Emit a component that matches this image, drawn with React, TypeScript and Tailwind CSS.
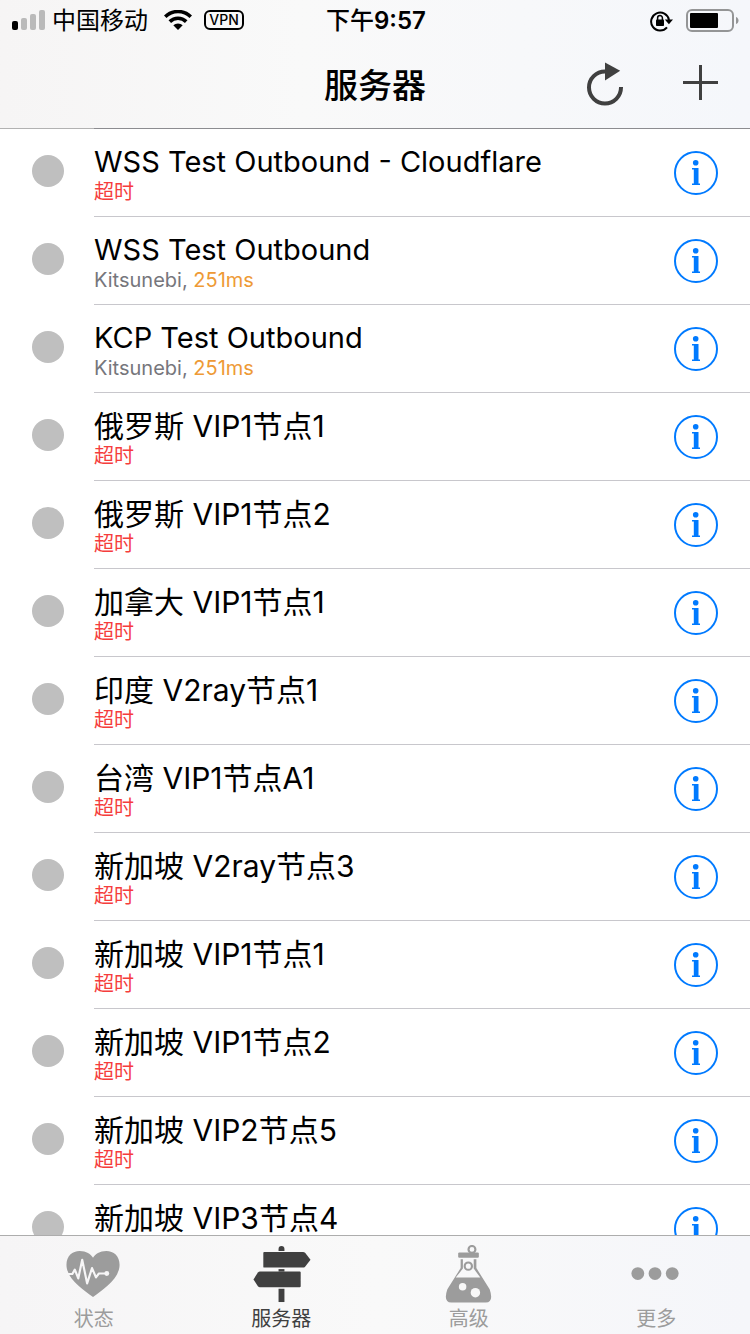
import clsx from 'clsx'

type Server = {
  name: string
  source?: string
  latency?: string
}

const servers: Server[] = [
  { name: 'WSS Test Outbound - Cloudflare' },
  { name: 'WSS Test Outbound', source: 'Kitsunebi', latency: '251ms' },
  { name: 'KCP Test Outbound', source: 'Kitsunebi', latency: '251ms' },
  { name: '俄罗斯 VIP1节点1' },
  { name: '俄罗斯 VIP1节点2' },
  { name: '加拿大 VIP1节点1' },
  { name: '印度 V2ray节点1' },
  { name: '台湾 VIP1节点A1' },
  { name: '新加坡 V2ray节点3' },
  { name: '新加坡 VIP1节点1' },
  { name: '新加坡 VIP1节点2' },
  { name: '新加坡 VIP2节点5' },
  { name: '新加坡 VIP3节点4' },
]

const tabs = [
  { label: '状态', Icon: HeartIcon },
  { label: '服务器', Icon: SignpostIcon, active: true },
  { label: '高级', Icon: FlaskIcon },
  { label: '更多', Icon: MoreIcon },
]

/* ---------- icons ---------- */

function SignalIcon() {
  return (
    <svg width="34" height="20" viewBox="0 0 34 20" aria-hidden="true">
      <rect x="0" y="11" width="6" height="9" rx="2" fill="#000" />
      <rect x="9" y="8" width="6" height="12" rx="2" fill="#bababa" />
      <rect x="18" y="4" width="6" height="16" rx="2" fill="#bababa" />
      <rect x="27" y="0" width="6" height="20" rx="2" fill="#bababa" />
    </svg>
  )
}

function WifiIcon() {
  return (
    <svg width="28" height="20" viewBox="0 0 28 20" fill="none" stroke="#000" strokeWidth="3.6" aria-hidden="true">
      <path d="M1.2 6.8 A18.2 18.2 0 0 1 26.8 6.8" />
      <path d="M5.8 11.6 A11.7 11.7 0 0 1 22.2 11.6" />
      <path d="M14 20 L9.3 15.3 A6.8 6.8 0 0 1 18.7 15.3 Z" fill="#000" stroke="none" />
    </svg>
  )
}

function RotationLockIcon() {
  return (
    <svg width="24" height="22" viewBox="0 0 24 22" fill="none" aria-hidden="true">
      <path d="M17 17.4 A9 9 0 1 1 19 10" stroke="#000" strokeWidth="2" />
      <path d="M14.8 9.6 H23 L18.9 14.2 Z" fill="#000" />
      <rect x="6" y="9.6" width="8" height="6.4" rx="0.8" fill="#000" />
      <path d="M7.6 10 V8 A2.4 2.4 0 0 1 12.4 8 V10" stroke="#000" strokeWidth="1.5" />
    </svg>
  )
}

function BatteryIcon() {
  return (
    <svg width="54" height="24" viewBox="0 0 54 24" aria-hidden="true">
      <rect x="1" y="1" width="46" height="21" rx="5" fill="none" stroke="#949596" strokeWidth="2" />
      <rect x="4" y="4" width="28" height="15" rx="1" fill="#000" />
      <path d="M50 8 C53.4 9 53.4 14 50 15 Z" fill="#949596" />
    </svg>
  )
}

function RefreshIcon() {
  return (
    <svg width="40" height="44" viewBox="0 0 40 44" fill="none" aria-hidden="true">
      <path d="M20 9.5 H19 A16 16 0 1 0 35 25.5 V25" stroke="#404040" strokeWidth="4" />
      <path d="M19 0.6 V18.5 L34.2 8.8 Z" fill="#404040" />
    </svg>
  )
}

function PlusIcon() {
  return (
    <svg width="36" height="38" viewBox="0 0 36 38" stroke="#404040" strokeWidth="3" aria-hidden="true">
      <path d="M1 17.5 H36 M18.5 0 V35" />
    </svg>
  )
}

function InfoIcon() {
  return (
    <svg width="44" height="44" viewBox="0 0 44 44" aria-hidden="true">
      <circle cx="22" cy="22" r="21" fill="none" stroke="#007aff" strokeWidth="2" />
      <circle cx="21.7" cy="11.7" r="2.8" fill="#007aff" />
      <path d="M18 17 H24.5 V32.5 H26 V34 H18 V32.5 H19.8 V18.5 H18 Z" fill="#007aff" />
    </svg>
  )
}

function HeartIcon() {
  return (
    <svg width="60" height="60" viewBox="0 0 60 60" aria-hidden="true">
      <path
        d="M29 53 C20 46 2 35 2 20 C2 11 8 6 15.5 6 C22 6 27 9 29 13 C31 9 36 6 42.500 6 C50 6 56 11 56 20 C56 35 38 46 29 53 Z"
        fill="currentColor"
      />
      <path
        d="M3 29.500 H8 L10.500 25 L14 34 L18 15 L23 39 L28 23.500 L32 33 L35 29 H42"
        fill="none"
        stroke="#f7f6f7"
        strokeWidth="2.2"
        strokeLinejoin="round"
      />
      <circle cx="43" cy="29" r="2.5" fill="#f7f6f7" />
    </svg>
  )
}

function SignpostIcon() {
  return (
    <svg width="60" height="60" viewBox="0 0 60 60" fill="currentColor" aria-hidden="true">
      <path d="M27.5 6 V4 A3 3 0 0 1 33.5 4 V6 Z" />
      <path d="M13 7 H52.5 Q53.5 7 54.5 8 L60 15 L54.5 22 Q53.5 23 52.5 23 H13 Q12 23 12 22 V8 Q12 7 13 7 Z" />
      <path d="M27.5 24.5 H33.5 V27 H27.5 Z" />
      <path d="M49 27 H8.500 Q7.500 27 6.500 28 L2 35 L6.500 42 Q7.500 43 8.500 43 H49 Q50 43 50 42 V28 Q50 27 49 27 Z" />
      <path d="M27.5 44.5 H33.5 V58 H27.5 Z" />
    </svg>
  )
}

function FlaskIcon() {
  return (
    <svg width="60" height="60" viewBox="0 0 60 60" aria-hidden="true">
      <g transform="translate(-1 0)">
        <circle cx="34" cy="4.5" r="3.5" fill="none" stroke="currentColor" strokeWidth="2.2" />
        <rect x="20" y="7.5" width="21" height="5.5" rx="1.2" fill="currentColor" />
        <path
          d="M22.500 14.500 H24.800 V24 L17.500 33 H42.500 L35.800 24 V14.500 H38.500 V23.500 L52 45 Q56.500 58 48 58.500 H13 Q4.500 58 9 45 L22.500 23.500 Z"
          fill="currentColor"
        />
        <circle cx="30.300" cy="21.500" r="3.7" fill="none" stroke="currentColor" strokeWidth="2.2" />
        <circle cx="24.5" cy="42.5" r="3.8" fill="#f8f8f8" />
        <circle cx="37.5" cy="48.5" r="4.8" fill="#f8f8f8" />
      </g>
    </svg>
  )
}

function MoreIcon() {
  return (
    <svg width="60" height="60" viewBox="0 0 60 60" fill="currentColor" aria-hidden="true">
      <circle cx="11.5" cy="29" r="6.5" />
      <circle cx="29" cy="29" r="6.5" />
      <circle cx="46.5" cy="29" r="6.5" />
    </svg>
  )
}

/* ---------- sections ---------- */

function StatusBar() {
  return (
    <div className="grid h-10 grid-cols-3 items-center pl-3 pr-2.5 text-[24px] leading-9 text-black">
      <div className="flex items-center">
        <SignalIcon />
        <span className="ml-1.5 pt-0.5">中国移动</span>
        <span className="ml-4">
          <WifiIcon />
        </span>
        <span className="ml-3 flex h-5 w-10 items-center justify-center rounded-md border-2 border-black text-[14px] font-medium leading-none">
          VPN
        </span>
      </div>
      <div className="pt-0.5 text-center font-medium">
        下午<span className="font-semibold">9:57</span>
      </div>
      <div className="flex items-center justify-end gap-3 pt-0.5">
        <RotationLockIcon />
        <BatteryIcon />
      </div>
    </div>
  )
}

function NavBar() {
  return (
    <div className="grid h-22 grid-cols-[1fr_auto_1fr] items-center px-8">
      <h1 className="col-start-2 pt-1 text-[34px] font-medium leading-10 text-black">服务器</h1>
      <div className="flex items-center justify-end gap-14">
        <button type="button" aria-label="刷新">
          <RefreshIcon />
        </button>
        <button type="button" aria-label="添加">
          <PlusIcon />
        </button>
      </div>
    </div>
  )
}

function ServerRow({ name, source, latency }: Server) {
  // Inter runs wider than the CJK face, so all-Latin names go one step down
  const latinOnly = /^[\x20-\x7e]+$/.test(name)

  return (
    <li className="flex h-22 shrink-0 pl-8">
      <span className="mt-[26px] mr-[30px] size-8 shrink-0 rounded-full bg-[#bfbfbf]" />
      <div className="flex min-w-0 flex-1 items-center justify-between border-b border-[#c8c7cc] pr-8">
        <div className="min-w-0 pt-1">
          <p className={clsx('truncate leading-[34px] text-black', latinOnly ? 'text-[29px]' : 'text-[30px]')}>
            {name}
          </p>
          <p className="text-[20px] leading-[26px]">
            {latency ? (
              <>
                <span className="text-[#76767c]">{source}, </span>
                <span className="text-[#ee9a36]">{latency}</span>
              </>
            ) : (
              <span className="text-[#f53d3d]">超时</span>
            )}
          </p>
        </div>
        <button type="button" aria-label={`${name} 详情`}>
          <InfoIcon />
        </button>
      </div>
    </li>
  )
}

function TabBar() {
  return (
    <nav className="grid shrink-0 grid-cols-4 border-t border-[#adadad] bg-linear-to-r from-[#f6f5f6] via-[#f9f9f9] to-[#f5f6fa]">
      {tabs.map(({ label, Icon, active }) => (
        <button
          key={label}
          type="button"
          aria-current={active ? 'page' : undefined}
          className={clsx(
            'flex h-[98px] flex-col items-center pt-[9px] text-[20px] leading-[30px]',
            active ? 'text-[#404040]' : 'text-[#9c9c9c]',
          )}
        >
          <Icon />
          <span>{label}</span>
        </button>
      ))}
    </nav>
  )
}

export default function App() {
  return (
    <div className="flex h-screen flex-col overflow-hidden bg-white font-['Inter','Noto_Sans_CJK_SC',sans-serif]">
      <header className="shrink-0 bg-linear-to-r from-[#f6f5f5] via-[#f9f9f9] via-40% to-[#f5f7fb]">
        <StatusBar />
        <NavBar />
        <div className="flex h-px">
          <div className="w-[94px] bg-[#b2b2b2]" />
          <div className="flex-1 bg-[#8c8c90]" />
        </div>
      </header>
      <ul className="flex min-h-0 flex-1 flex-col overflow-y-auto [scrollbar-width:none]">
        {servers.map((server) => (
          <ServerRow key={server.name} {...server} />
        ))}
      </ul>
      <TabBar />
    </div>
  )
}
